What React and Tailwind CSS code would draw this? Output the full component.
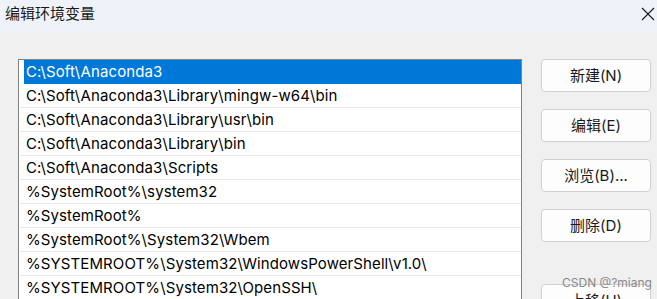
import React from "react";

const rows = [
  "C:\\Soft\\Anaconda3",
  "C:\\Soft\\Anaconda3\\Library\\mingw-w64\\bin",
  "C:\\Soft\\Anaconda3\\Library\\usr\\bin",
  "C:\\Soft\\Anaconda3\\Library\\bin",
  "C:\\Soft\\Anaconda3\\Scripts",
  "%SystemRoot%\\system32",
  "%SystemRoot%",
  "%SystemRoot%\\System32\\Wbem",
  "%SYSTEMROOT%\\System32\\WindowsPowerShell\\v1.0\\",
  "%SYSTEMROOT%\\System32\\OpenSSH\\",
  "%SYSTEMROOT%\\System32\\",
];

const font = { fontFamily: 'Inter, "Noto Sans CJK SC", sans-serif' };

function Btn({ children, className = "" }) {
  return (
    <div
      className={
        "w-[110px] h-[33px] shrink-0 rounded-[4px] border border-[#d0d0d0] bg-[#fdfdfd] flex items-center justify-center text-[15px] leading-[18px] text-[#1a1a1a] " +
        className
      }
    >
      {children}
    </div>
  );
}

export default function App() {
  return (
    <div
      className="relative w-[657px] h-[299px] overflow-hidden bg-[#f0f0f0] flex flex-col"
      style={font}
    >
      <div className="h-[33px] shrink-0 bg-[#eef3f9] flex items-start justify-between pl-[5px] pr-[2px]">
        <span className="mt-[5px] text-[15px] leading-[18px] text-[#1a1a1a]">编辑环境变量</span>
        <svg width="14" height="14" viewBox="0 0 14 14" className="mt-[7px]">
          <path d="M1 1 L13 13 M13 1 L1 13" stroke="#1a1a1a" strokeWidth="1.1" fill="none" />
        </svg>
      </div>
      <div className="flex pl-[18px] pt-[26px]">
        <div className="w-[504px] h-[300px] shrink-0 border border-[#828282] bg-white pl-[1px]">
          {rows.map((r, i) =>
            i === 0 ? (
              <div key={i} className="h-[24px] flex">
                <div className="ml-[4px] flex-1 bg-[#0078d7] text-white text-[15px] leading-[24px] tracking-[0.1px] pl-[2px] whitespace-nowrap">
                  {r}
                </div>
              </div>
            ) : (
              <div
                key={i}
                className="h-[24px] border-b border-[#e8e8e8] text-[15px] leading-[23px] tracking-[0.1px] pl-[6px] text-black whitespace-nowrap"
              >
                {r}
              </div>
            )
          )}
        </div>
        <div className="ml-[19px] flex flex-col gap-[17px]">
          <Btn>新建(N)</Btn>
          <Btn>编辑(E)</Btn>
          <Btn>浏览(B)...</Btn>
          <Btn>删除(D)</Btn>
          <Btn className="mt-[25px]">上移(U)</Btn>
        </div>
      </div>
      <div className="absolute left-[562px] top-[276px] text-[12px] leading-[14px] text-[#8a8a8a]">
        CSDN @?miang
      </div>
    </div>
  );
}
